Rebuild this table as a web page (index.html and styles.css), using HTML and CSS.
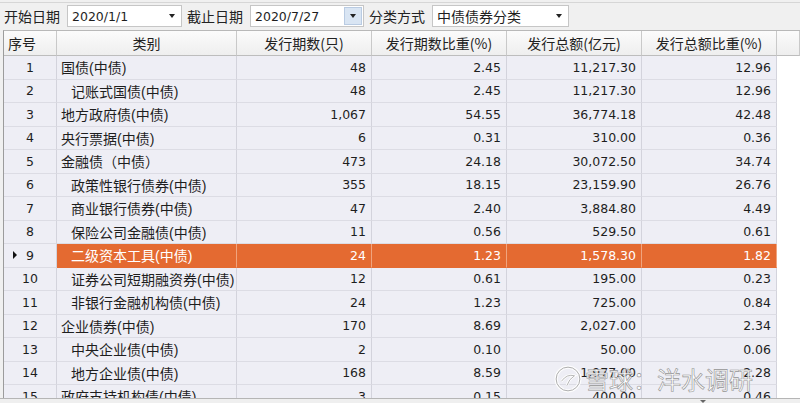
FILE: index.html
```html
<!DOCTYPE html>
<html lang="zh">
<head>
<meta charset="utf-8">
<link rel="stylesheet" href="styles.css">
</head>
<body>
<div class="app">
  <div class="toolbar">
    <span class="lbl">开始日期</span>
    <div class="combo w1"><span class="val">2020/1/1</span><span class="arrow"></span></div>
    <span class="lbl">截止日期</span>
    <div class="combo w2"><span class="val">2020/7/27</span><span class="arrow btn"></span></div>
    <span class="lbl">分类方式</span>
    <div class="combo w3"><span class="val cjk">中债债券分类</span><span class="arrow"></span></div>
  </div>
  <div class="grid">
    <div class="row head">
      <div class="c seq">序号</div>
      <div class="c ctr">类别</div>
      <div class="c ctr">发行期数(只)</div>
      <div class="c ctr">发行期数比重(%)</div>
      <div class="c ctr">发行总额(亿元)</div>
      <div class="c ctr">发行总额比重(%)</div>
      <div class="c fill"></div>
    </div>
    <div class="row"><div class="c no">1</div><div class="c cat">国债(中债)</div><div class="c num">48</div><div class="c num">2.45</div><div class="c num">11,217.30</div><div class="c num">12.96</div><div class="c fill"></div></div>
    <div class="row"><div class="c no">2</div><div class="c cat sub">记账式国债(中债)</div><div class="c num">48</div><div class="c num">2.45</div><div class="c num">11,217.30</div><div class="c num">12.96</div><div class="c fill"></div></div>
    <div class="row"><div class="c no">3</div><div class="c cat">地方政府债(中债)</div><div class="c num">1,067</div><div class="c num">54.55</div><div class="c num">36,774.18</div><div class="c num">42.48</div><div class="c fill"></div></div>
    <div class="row"><div class="c no">4</div><div class="c cat">央行票据(中债)</div><div class="c num">6</div><div class="c num">0.31</div><div class="c num">310.00</div><div class="c num">0.36</div><div class="c fill"></div></div>
    <div class="row"><div class="c no">5</div><div class="c cat">金融债（中债）</div><div class="c num">473</div><div class="c num">24.18</div><div class="c num">30,072.50</div><div class="c num">34.74</div><div class="c fill"></div></div>
    <div class="row"><div class="c no">6</div><div class="c cat sub">政策性银行债券(中债)</div><div class="c num">355</div><div class="c num">18.15</div><div class="c num">23,159.90</div><div class="c num">26.76</div><div class="c fill"></div></div>
    <div class="row"><div class="c no">7</div><div class="c cat sub">商业银行债券(中债)</div><div class="c num">47</div><div class="c num">2.40</div><div class="c num">3,884.80</div><div class="c num">4.49</div><div class="c fill"></div></div>
    <div class="row"><div class="c no">8</div><div class="c cat sub">保险公司金融债(中债)</div><div class="c num">11</div><div class="c num">0.56</div><div class="c num">529.50</div><div class="c num">0.61</div><div class="c fill"></div></div>
    <div class="row sel"><div class="c no"><span class="ptr"></span>9</div><div class="c cat sub">二级资本工具(中债)</div><div class="c num">24</div><div class="c num">1.23</div><div class="c num">1,578.30</div><div class="c num">1.82</div><div class="c fill"></div></div>
    <div class="row"><div class="c no">10</div><div class="c cat sub">证券公司短期融资券(中债)</div><div class="c num">12</div><div class="c num">0.61</div><div class="c num">195.00</div><div class="c num">0.23</div><div class="c fill"></div></div>
    <div class="row"><div class="c no">11</div><div class="c cat sub">非银行金融机构债(中债)</div><div class="c num">24</div><div class="c num">1.23</div><div class="c num">725.00</div><div class="c num">0.84</div><div class="c fill"></div></div>
    <div class="row"><div class="c no">12</div><div class="c cat">企业债券(中债)</div><div class="c num">170</div><div class="c num">8.69</div><div class="c num">2,027.00</div><div class="c num">2.34</div><div class="c fill"></div></div>
    <div class="row"><div class="c no">13</div><div class="c cat sub">中央企业债(中债)</div><div class="c num">2</div><div class="c num">0.10</div><div class="c num">50.00</div><div class="c num">0.06</div><div class="c fill"></div></div>
    <div class="row"><div class="c no">14</div><div class="c cat sub">地方企业债(中债)</div><div class="c num">168</div><div class="c num">8.59</div><div class="c num">1,977.00</div><div class="c num">2.28</div><div class="c fill"></div></div>
    <div class="row"><div class="c no">15</div><div class="c cat">政府支持机构债(中债)</div><div class="c num">3</div><div class="c num">0.15</div><div class="c num">400.00</div><div class="c num">0.46</div><div class="c fill"></div></div>
    <div class="watermark">
      <svg class="wm-logo" width="28" height="28" viewBox="0 0 26 26">
        <circle cx="13" cy="13" r="11" fill="none" stroke="#fff" stroke-width="3"/>
        <circle cx="13" cy="13" r="11" fill="none" stroke="#9a9a9a" stroke-width="0.8"/>
        <path d="M7 15 Q12 8 19 10 Q14 13 12 19" fill="none" stroke="#fff" stroke-width="2.4"/>
        <path d="M7 15 Q12 8 19 10 Q14 13 12 19" fill="none" stroke="#9a9a9a" stroke-width="0.7"/>
      </svg>
      <span class="wm-text">雪球：洋水调研</span>
    </div>
  </div>
  <div class="footer"><span class="grip"></span></div>
</div>
</body>
</html>
```

FILE: styles.css
```css
html, body {
  margin: 0;
  padding: 0;
}
body {
  background: #f0f0f0;
  font-family: "Liberation Sans", "Noto Sans CJK SC", sans-serif;
  color: #1e1e1e;
  width: 800px;
  height: 403px;
  overflow: hidden;
}
.app {
  display: flex;
  flex-direction: column;
  height: 403px;
}
.toolbar {
  height: 28px;
  box-sizing: border-box;
  border-top: 1px solid #d6d6d6;
  margin-top: 2px;
  padding-top: 2px;
  display: flex;
  align-items: flex-start;
  flex: none;
}
.lbl {
  font-family: "Noto Sans CJK SC", sans-serif;
  font-size: 14px;
  line-height: 22px;
  height: 22px;
  margin-left: 5px;
  margin-right: 7px;
  color: #222;
}
.toolbar .lbl:first-child { margin-left: 4px; }
.combo {
  height: 22px;
  box-sizing: border-box;
  background: #fff;
  border: 1px solid #c6c6c6;
  display: flex;
  align-items: center;
  justify-content: space-between;
  padding-left: 4px;
}
.w1 { width: 115px; }
.w2 { width: 114px; padding-right: 1px; }
.w3 { width: 137px; }
.val {
  font-family: "DejaVu Sans", sans-serif;
  font-size: 12.5px;
  color: #1e1e1e;
}
.val.cjk {
  font-family: "Noto Sans CJK SC", sans-serif;
  font-size: 14px;
}
.arrow {
  width: 18px;
  height: 18px;
  display: flex;
  align-items: center;
  justify-content: center;
  box-sizing: border-box;
}
.arrow::after {
  content: "";
  border-left: 3.5px solid transparent;
  border-right: 3.5px solid transparent;
  border-top: 4px solid #222;
}
.arrow.btn {
  background: #d9e5f3;
  border: 1px solid #b9cbe2;
}
.grid {
  position: relative;
  flex: none;
  height: 368px;
  margin-left: 3px;
  border-left: 1px solid #9c9c9c;
  border-top: 1px solid #b8b8b8;
  box-sizing: border-box;
  overflow: hidden;
  background: #fff;
}
.row {
  display: grid;
  grid-template-columns: 53px 180px 135px 135px 135px 135px 1fr;
  height: 23.5px;
  background: #eeeef5;
}
.row .c {
  box-sizing: border-box;
  border-right: 1px solid #d3d3dc;
  border-bottom: 1px solid #dcdce4;
  display: flex;
  align-items: center;
  white-space: nowrap;
  overflow: hidden;
}
.row .fill {
  background: #fff;
  border-right: none;
  border-bottom: none;
}
.head {
  height: 25px;
  background: linear-gradient(#fbfbfb, #eeeeee);
}
.head .c {
  font-family: "Noto Sans CJK SC", sans-serif;
  font-size: 14px;
  color: #222;
  border-right: 1px solid #c9c9c9;
  border-bottom: 1px solid #bdbdbd;
}
.head .fill {
  background: linear-gradient(#fbfbfb, #eeeeee);
  border-bottom: 1px solid #bdbdbd;
}
.head .seq { padding-left: 4px; }
.head .ctr { justify-content: center; }
.no {
  justify-content: center;
  font-family: "DejaVu Sans", sans-serif;
  font-size: 12.5px;
  position: relative;
}
.cat {
  font-family: "Liberation Sans", "Noto Sans CJK SC", sans-serif;
  font-size: 14px;
  padding-left: 4px;
}
.cat.sub { padding-left: 14px; }
.num {
  justify-content: flex-end;
  padding-right: 5px;
  font-family: "DejaVu Sans", sans-serif;
  font-size: 12.5px;
}
.sel .c:not(.no):not(.fill) {
  background: #e46a31;
  color: #fff;
  border-right-color: #f0a47e;
  border-bottom-color: #e46a31;
}
.ptr {
  position: absolute;
  left: 9px;
  top: 50%;
  margin-top: -4px;
  border-top: 4px solid transparent;
  border-bottom: 4px solid transparent;
  border-left: 4px solid #111;
}
.watermark {
  position: absolute;
  left: 550px;
  top: 333px;
  display: flex;
  align-items: center;
  gap: 3px;
  opacity: 0.92;
}
.wm-text {
  font-family: "Noto Sans CJK SC", sans-serif;
  font-size: 24px;
  line-height: 30px;
  color: #fff;
  letter-spacing: 0;
  -webkit-text-stroke: 0.6px #8c8c8c;
}
.footer {
  flex: 1;
  border-top: 1px solid #b5b5b5;
  background: #efefef;
  position: relative;
}
.grip {
  position: absolute;
  left: 700px;
  top: 1px;
  border-left: 3px solid transparent;
  border-right: 3px solid transparent;
  border-top: 3px solid #666;
}
```
